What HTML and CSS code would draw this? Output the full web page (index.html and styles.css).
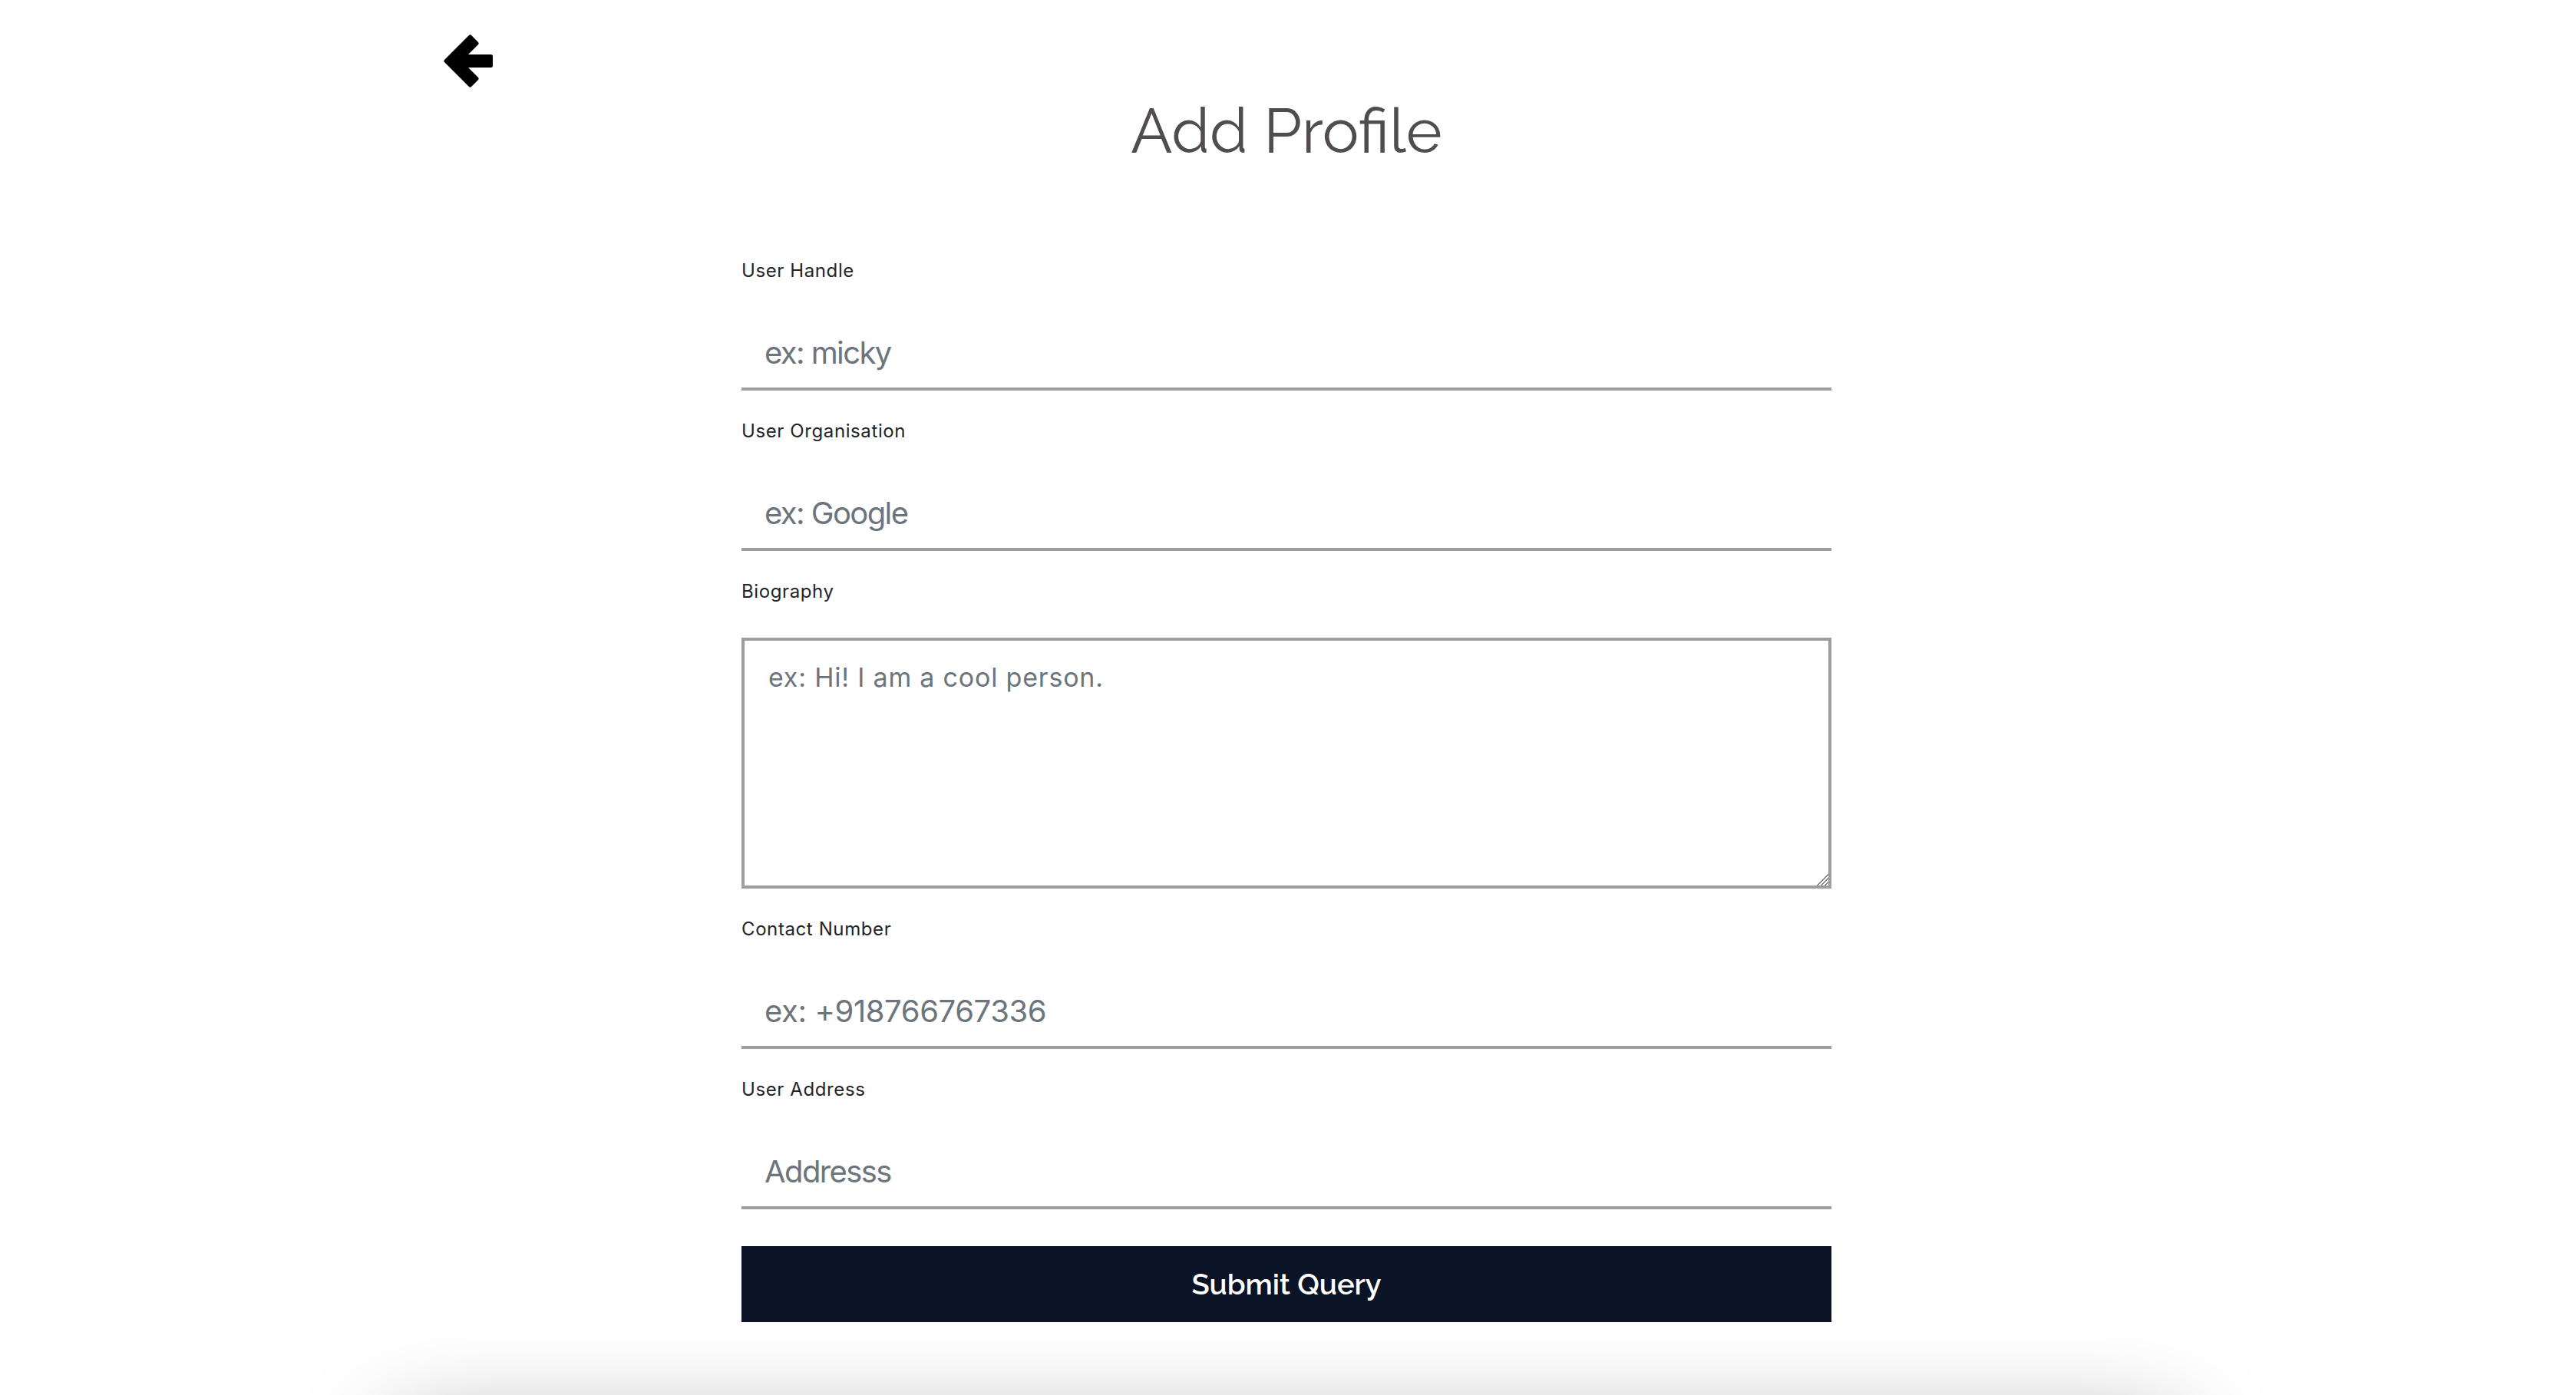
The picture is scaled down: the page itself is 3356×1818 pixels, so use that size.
FILE: index.html
```html
<!DOCTYPE html>
<html lang="en">
<head>
<meta charset="utf-8">
<title>Add Profile</title>
<link rel="stylesheet" href="styles.css">
</head>
<body>
<header class="topbar">
  <a class="back" href="#" aria-label="Back">
    <svg width="66" height="69" viewBox="0 0 66 69" xmlns="http://www.w3.org/2000/svg">
      <path d="M3.01 34.5 L34.52 3 L43 11.48 L25.99 28.5 L61.5 28.5 L61.5 40.5 L25.99 40.5 L43 57.52 L34.52 66 Z" fill="#000" stroke="#000" stroke-width="5" stroke-linejoin="round"/>
    </svg>
  </a>
</header>
<main class="page">
  <h1 class="title">Add Profile</h1>
  <form class="profile-form" onsubmit="return false">
    <div class="field">
      <label class="label" for="handle">User Handle</label>
      <input class="input" id="handle" type="text" placeholder="ex: micky">
    </div>
    <div class="field">
      <label class="label" for="org">User Organisation</label>
      <input class="input" id="org" type="text" placeholder="ex: Google">
    </div>
    <div class="field">
      <label class="label" for="bio">Biography</label>
      <textarea class="textarea" id="bio" placeholder="ex: Hi! I am a cool person."></textarea>
    </div>
    <div class="field">
      <label class="label" for="phone">Contact Number</label>
      <input class="input input--numeric" id="phone" type="text" placeholder="ex: +918766767336">
    </div>
    <div class="field">
      <label class="label" for="addr">User Address</label>
      <input class="input" id="addr" type="text" placeholder="Addresss">
    </div>
    <button class="submit" type="submit">Submit Query</button>
  </form>
</main>
<section class="below"></section>
</body>
</html>
```
FILE: styles.css
```css
html, body {
  margin: 0;
  padding: 0;
  background: #ffffff;
}

body {
  padding-right: 4px;
  font-family: Inter, "Noto Sans", sans-serif;
  color: #212529;
}

.topbar {
  width: 2196px;
  margin: 0 auto;
  padding-top: 45px;
}

.back {
  display: block;
  width: 66px;
  height: 69px;
}

.back svg {
  display: block;
}

.title {
  margin: 9px 0 0;
  text-align: center;
  font-family: Raleway, Lato, sans-serif;
  font-weight: 400;
  font-size: 80px;
  line-height: 96px;
  color: #524d4d;
}

.profile-form {
  width: 1420px;
  margin: 116px auto 0;
  display: flex;
  flex-direction: column;
  gap: 35px;
}

.field {
  display: flex;
  flex-direction: column;
}

.label {
  display: block;
  font-size: 24px;
  line-height: 36px;
  letter-spacing: 0.6px;
  margin-bottom: 42px;
  color: #212529;
}

.input {
  box-sizing: border-box;
  width: 100%;
  height: 96px;
  padding: 0 30px;
  border: 0;
  border-bottom: 4px solid #9e9e9e;
  border-radius: 0;
  background: transparent;
  font-family: Inter, "Noto Sans", sans-serif;
  font-size: 40px;
  letter-spacing: -1.6px;
  color: #495057;
  outline: none;
}

.input--numeric {
  letter-spacing: -0.4px;
}

.textarea {
  box-sizing: border-box;
  width: 100%;
  height: 327px;
  padding: 23px 30px 23px 31px;
  border: 4px solid #9e9e9e;
  border-radius: 0;
  background: transparent;
  font-family: Inter, "Noto Sans", sans-serif;
  font-size: 34px;
  line-height: 1.45;
  letter-spacing: 0.8px;
  color: #495057;
  outline: none;
}

.textarea::-webkit-scrollbar {
  width: 30px;
  height: 30px;
}

.textarea::-webkit-resizer {
  background: linear-gradient(135deg,
    transparent 0 50%,
    #7a7a7a 50% 55%,
    transparent 55% 66%,
    #7a7a7a 66% 71%,
    transparent 71% 82%,
    #7a7a7a 82% 87%,
    transparent 87% 100%);
}

.input::placeholder,
.textarea::placeholder {
  color: #6c757d;
  opacity: 1;
}

.submit {
  margin-top: 13px;
  height: 99px;
  width: 100%;
  border: 0;
  border-radius: 0;
  background: #0b1426;
  color: #ffffff;
  font-family: Raleway, Lato, sans-serif;
  font-weight: 600;
  font-size: 38px;
  cursor: pointer;
}

.below {
  width: 2320px;
  height: 400px;
  margin: 144px auto 0;
  background: #ffffff;
  box-shadow: 0 0 120px rgba(0, 0, 0, 0.4);
}
```
